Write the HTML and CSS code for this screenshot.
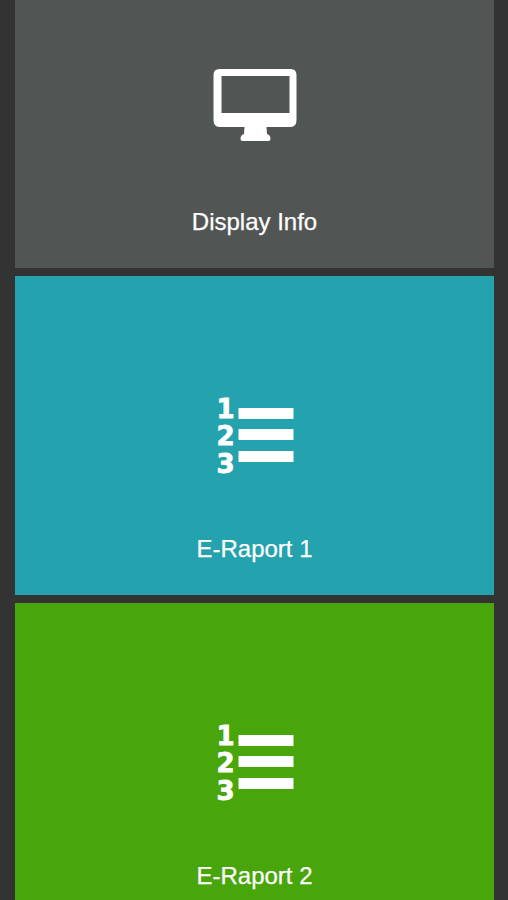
FILE: index.html
```html
<!DOCTYPE html>
<html lang="en">
<head>
<meta charset="utf-8">
<title>Menu</title>
<link rel="stylesheet" href="styles.css">
</head>
<body>
<main class="menu">
  <a class="tile tile-grey">
    <svg class="icon" viewBox="0 0 84 84" aria-hidden="true">
      <path class="glyph" fill-rule="evenodd" d="M6.500 2H77.500Q83.500 2 83.500 8V53Q83.500 60 77.500 60H53.500L54 67Q57.500 68 57.500 72Q57.500 74 55.500 74H29.500Q27.500 74 27.500 72Q27.500 68 31 67L31.500 60H6.500Q.5 60 .5 53V8Q.5 2 6.500 2ZM8.500 9V46H76.500V9Z"/>
    </svg>
    <span class="label">Display Info</span>
  </a>
  <a class="tile tile-teal">
    <svg class="icon" viewBox="0 0 84 84" aria-hidden="true">
      <text class="digit" x="12.500" y="23.500">1</text>
      <text class="digit" x="12.500" y="51">2</text>
      <text class="digit" x="12.500" y="78.500">3</text>
      <rect class="glyph" x="25.500" y="14" width="55" height="11"/>
      <rect class="glyph" x="25.500" y="35" width="55" height="11"/>
      <rect class="glyph" x="25.500" y="57" width="55" height="11"/>
    </svg>
    <span class="label">E-Raport 1</span>
  </a>
  <a class="tile tile-green">
    <svg class="icon" viewBox="0 0 84 84" aria-hidden="true">
      <text class="digit" x="12.500" y="23.500">1</text>
      <text class="digit" x="12.500" y="51">2</text>
      <text class="digit" x="12.500" y="78.500">3</text>
      <rect class="glyph" x="25.500" y="14" width="55" height="11"/>
      <rect class="glyph" x="25.500" y="35" width="55" height="11"/>
      <rect class="glyph" x="25.500" y="57" width="55" height="11"/>
    </svg>
    <span class="label">E-Raport 2</span>
  </a>
</main>
</body>
</html>
```
FILE: styles.css
```css
html, body {
  margin: 0;
  height: 900px;
  overflow: hidden;
  background: #333333;
}
.menu {
  display: flex;
  flex-direction: column;
  gap: 8px;
  margin-top: -51px;
  padding: 0 14px 0 15px;
}
.tile {
  height: 319px;
  display: flex;
  flex-direction: column;
  align-items: center;
  padding-top: 118px;
  box-sizing: border-box;
  color: #ffffff;
  font-family: "Liberation Sans", Arial, sans-serif;
  font-size: 24px;
}
.tile-grey { background: #515654; }
.tile-teal { background: #24a2ad; }
.tile-green { background: #48a50c; }
.icon {
  width: 84px;
  height: 84px;
  flex: none;
}
.glyph { fill: #ffffff; }
.digit {
  fill: #ffffff;
  stroke: #ffffff;
  stroke-width: 0.8px;
  font-family: "DejaVu Sans", sans-serif;
  font-weight: 700;
  font-size: 26px;
  text-anchor: middle;
}
.label {
  margin-top: 57px;
  line-height: 28px;
  -webkit-text-stroke: 0.25px #ffffff;
}
```
